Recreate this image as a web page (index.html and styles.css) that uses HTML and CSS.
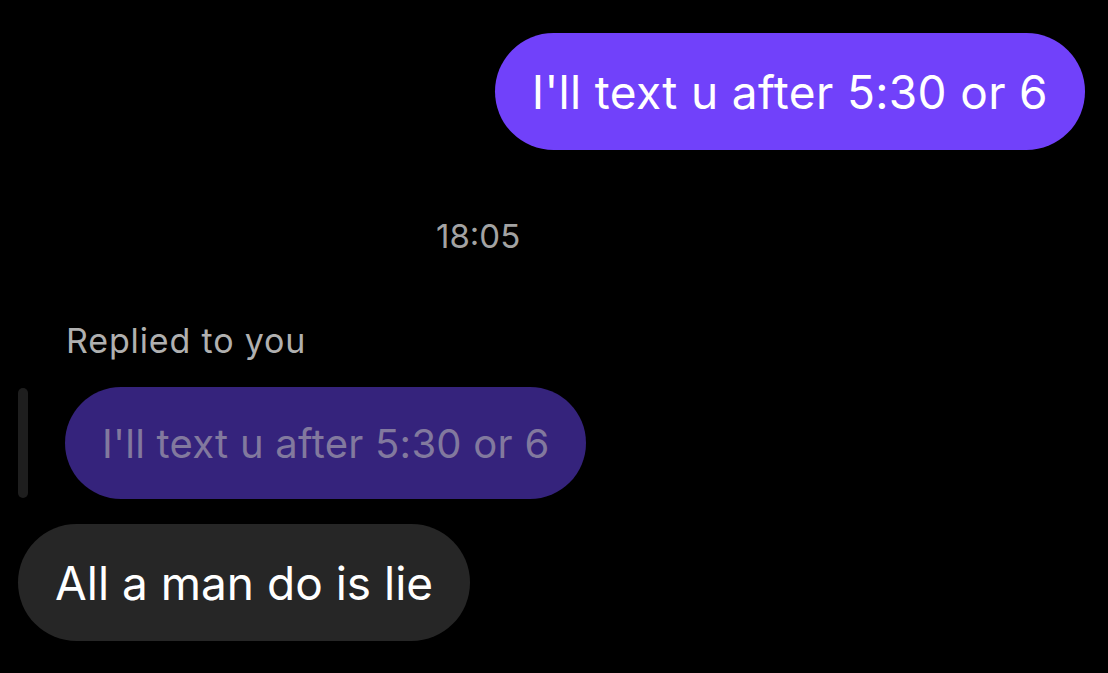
FILE: index.html
```html
<!DOCTYPE html>
<html>
<head>
<meta charset="utf-8">
<link rel="stylesheet" href="styles.css">
</head>
<body>
<div class="chat">
  <div class="row sent-row">
    <div class="bubble sent">I'll text u after 5:30 or 6</div>
  </div>
  <div class="time">18:05</div>
  <div class="reply-label">Replied to you</div>
  <div class="quote">
    <div class="quote-bar"></div>
    <div class="bubble quoted">I'll text u after 5:30 or 6</div>
  </div>
  <div class="row recv-row">
    <div class="bubble recv">All a man do is lie</div>
  </div>
</div>
</body>
</html>
```
FILE: styles.css
```css
html, body {
  margin: 0;
  padding: 0;
  background: #000;
  height: 100%;
  overflow: hidden;
}
body {
  font-family: Inter, Roboto, sans-serif;
  color: #fff;
}
.chat {
  display: flex;
  flex-direction: column;
  padding: 33px 23px 0 18px;
}
.row {
  display: flex;
}
.sent-row {
  justify-content: flex-end;
}
.bubble {
  border-radius: 60px;
  white-space: nowrap;
  box-sizing: border-box;
  display: flex;
  align-items: center;
}
.sent {
  background: #7141fa;
  height: 117px;
  padding: 0 37px;
  font-size: 46px;
  letter-spacing: 0.35px;
  color: #fff;
}
.time {
  margin-top: 66px;
  padding-left: 418px;
  font-size: 33px;
  color: #a3a3a3;
  line-height: 40px;
}
.reply-label {
  margin-top: 65px;
  padding-left: 48px;
  font-size: 34px;
  letter-spacing: 0.85px;
  color: #b0b0b0;
  line-height: 40px;
}
.quote {
  margin-top: 26px;
  display: flex;
  align-items: center;
  gap: 37px;
}
.quote-bar {
  width: 10px;
  height: 110px;
  border-radius: 5px;
  background: #1e1e1e;
}
.quoted {
  background: #35237c;
  height: 112px;
  padding: 0 37px;
  font-size: 40px;
  letter-spacing: 0.25px;
  color: #82799e;
}
.recv-row {
  margin-top: 25px;
}
.recv {
  background: #262626;
  height: 117px;
  padding: 0 37px;
  font-size: 46px;
  color: #fff;
}
```
